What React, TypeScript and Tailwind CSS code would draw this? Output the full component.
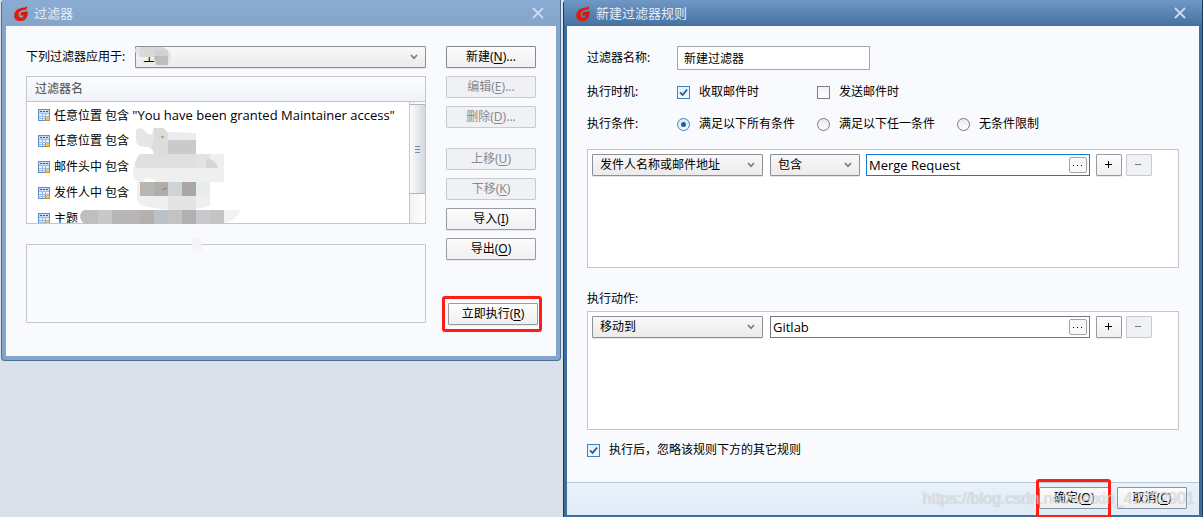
import type { ReactNode, SelectHTMLAttributes, ButtonHTMLAttributes } from "react";

function Logo() {
  return (
    <svg viewBox="0 0 14 15" className="h-[15px] w-[14px] shrink-0" aria-hidden="true">
      <path
        d="M13 0 L13 2.4 C12.5 3.5 11.4 3.9 9.8 4 C6.6 4.4 4.8 6 4.6 8.6 C4.5 10.6 5.3 11.5 6.8 11.5 C8.3 11.5 9.3 11 9.6 9.4 L6.2 9.4 L7.2 6.2 L13.8 5.2 C14 11.4 11.8 15 6.2 15 C2.2 15 0 12.8 0.2 9.4 C0.4 5.2 3.6 2 8.6 1.8 C10.8 1.6 12 1.2 13 0 Z"
        fill="#dc1f0c"
      />
      <path d="M6.6 9.2 L7.8 7.2 L11.4 6.6 C11.4 8.6 11 10.2 10 11" fill="none" stroke="#a81005" strokeWidth="0.6" />
    </svg>
  );
}

function TitleBar({ title, active }: { title: string; active?: boolean }) {
  return (
    <header
      className={
        "flex h-[26px] items-center gap-[6px] pr-4 pl-3 text-[#e3edf8] " +
        (active ? "bg-linear-to-b from-[#7098c6] to-[#44719f]" : "bg-linear-to-b from-[#8bacd2] to-[#84a4ca]")
      }
    >
      <Logo />
      <h1 className="flex-1 text-[13px] leading-5">{title}</h1>
      <button type="button" aria-label="关闭" className="grid h-5 w-3 place-items-center">
        <svg viewBox="0 0 12 12" className="h-3 w-3" aria-hidden="true">
          <path d="M1 1 L11 11 M11 1 L1 11" stroke="#c8dcf0" strokeWidth="1.8" />
        </svg>
      </button>
    </header>
  );
}

function PushButton({ children, className = "", ...rest }: ButtonHTMLAttributes<HTMLButtonElement>) {
  return (
    <button
      type="button"
      className={
        "flex h-[22px] shrink-0 items-center justify-center rounded-[1px] border border-[#999ba0] bg-linear-to-b from-[#fcfcfc] to-[#f0f0f1] shadow-[0_1px_0_#e9eaee] disabled:border-[#c8cacd] disabled:from-[#f0f1f4] disabled:to-[#f0f1f4] disabled:text-[#88898c] disabled:shadow-none " +
        className
      }
      {...rest}
    >
      {children}
    </button>
  );
}

function Mnemonic({ label, k, more }: { label: string; k: string; more?: boolean }) {
  return (
    <span>
      {label}(<u className="underline-offset-2">{k}</u>){more ? "..." : ""}
    </span>
  );
}

function DropDown({ className = "", children, ...rest }: SelectHTMLAttributes<HTMLSelectElement>) {
  return (
    <div className={"grid h-[22px] items-center " + className}>
      <select
        className="col-start-1 row-start-1 h-[22px] w-full appearance-none rounded-[1px] border border-[#8d8f93] bg-linear-to-b from-[#f8f8f8] to-[#ebebec] pr-6 pl-[7px] shadow-[0_1px_0_#e4e5e9]"
        {...rest}
      >
        {children}
      </select>
      <svg
        viewBox="0 0 8 6"
        className="pointer-events-none col-start-1 row-start-1 mr-2 h-[6px] w-2 justify-self-end"
        aria-hidden="true"
      >
        <path d="M1 1 L4 4.4 L7 1" fill="none" stroke="#77797d" strokeWidth="1.6" />
      </svg>
    </div>
  );
}

function Check({ label, checked }: { label: string; checked?: boolean }) {
  return (
    <label className="flex items-center gap-[9px]">
      <span className="grid h-[13px] w-[13px] place-items-center">
        <input
          type="checkbox"
          defaultChecked={checked}
          className="peer col-start-1 row-start-1 h-[13px] w-[13px] appearance-none border border-[#7f8084] bg-linear-to-b from-[#f2f2f3] to-white checked:border-[#3d85bf] checked:from-[#e2f0fa] checked:to-[#f4fafe]"
        />
        <svg
          viewBox="0 0 9 9"
          className="pointer-events-none invisible col-start-1 row-start-1 h-[9px] w-[9px] peer-checked:visible"
          aria-hidden="true"
        >
          <path d="M1 4.4 L3.6 7 L8 1.6" fill="none" stroke="#1f609c" strokeWidth="1.8" />
        </svg>
      </span>
      {label}
    </label>
  );
}

function Radio({ label, checked }: { label: string; checked?: boolean }) {
  return (
    <label className="flex items-center gap-[9px]">
      <span className="grid h-[13px] w-[13px] place-items-center">
        <input
          type="radio"
          name="match"
          defaultChecked={checked}
          className="peer col-start-1 row-start-1 h-[13px] w-[13px] appearance-none rounded-full border border-[#77797d] bg-linear-to-b from-[#e9e9ea] to-white checked:border-[#3d85bf] checked:from-[#d6eafa] checked:to-[#f0f8fe]"
        />
        <span className="pointer-events-none invisible col-start-1 row-start-1 h-[5px] w-[5px] rounded-full bg-[#1c609d] peer-checked:visible" />
      </span>
      {label}
    </label>
  );
}

function BrowseField({ id, label, value, focus }: { id: string; label: string; value: string; focus?: boolean }) {
  return (
    <div
      className={
        "flex h-[22px] min-w-0 flex-1 items-center border bg-white pr-[2px] " +
        (focus ? "border-[#0f7bd4]" : "border-[#77797d]")
      }
    >
      <input
        id={id}
        aria-label={label}
        defaultValue={value}
        className="h-5 min-w-0 flex-1 bg-transparent pl-[2px] font-['Open_Sans','Noto_Sans_CJK_SC',sans-serif] text-[13px] outline-none"
      />
      <button
        type="button"
        aria-label="浏览"
        className="grid h-4 w-[18px] place-items-center rounded-[2px] border border-[#a2a4a8] bg-[#f9f9fa]"
      >
        <svg viewBox="0 0 10 1" className="h-px w-[10px]" aria-hidden="true">
          <path d="M0 0h1v1h-1z M4 0h1v1h-1z M8 0h1v1h-1z" fill="#000" />
        </svg>
      </button>
    </div>
  );
}

function AddRemove() {
  return (
    <div className="flex gap-1">
      <PushButton aria-label="添加" className="w-[26px]">
        <svg viewBox="0 0 8 8" className="h-2 w-2" aria-hidden="true">
          <path d="M3 0h1v3h3v1h-3v3h-1v-3h-3v-1h3z" fill="#000" />
        </svg>
      </PushButton>
      <PushButton aria-label="移除" className="w-[26px]" disabled>
        <svg viewBox="0 0 8 8" className="h-2 w-2" aria-hidden="true">
          <path d="M0 3h6v1h-6z" fill="#77797d" />
        </svg>
      </PushButton>
    </div>
  );
}

function RuleIcon() {
  return (
    <svg viewBox="0 0 12 12" className="h-3 w-3 shrink-0" aria-hidden="true">
      <rect x="0.5" y="0.5" width="11" height="11" fill="#e6effa" stroke="#5f8fca" />
      <rect x="1" y="1" width="10" height="3" fill="#c9dcf3" />
      <path d="M2 2.5h2M5 2.5h2M8 2.5h2" stroke="#2f5fa5" />
      <path d="M1 4.5h10M1 7.5h10M1 9.5h10M4.5 4v7M7.5 4v7" stroke="#9dbce3" />
      <rect x="7" y="8" width="5" height="4" fill="#e08a1e" />
      <rect x="8" y="8" width="3" height="3" fill="#ffc04d" />
    </svg>
  );
}

function AccountMosaic() {
  return (
    <svg viewBox="0 0 40 24" className="pointer-events-none absolute top-0 left-0 h-6 w-10" aria-hidden="true">
      <path d="M0 4 Q0 1 5 1 L28 1 Q37 5 36 12 Q36 17 31 20 L19 20 L19 11 L5 11 Q0 8 0 4Z" fill="#e4e4e5" />
      <path d="M5 1h23l5 4v6h-28z" fill="#d9d9da" />
      <path d="M19 4h14v15h-11q-3-4-3-9z" fill="#bebebf" />
      <path d="M19 4h14v6h-14z" fill="#d0d0d1" />
    </svg>
  );
}

function ListMosaic() {
  return (
    <svg
      viewBox="0 0 170 130"
      className="pointer-events-none absolute top-[49px] left-[54px] h-[130px] w-[170px]"
      aria-hidden="true"
    >
      <path d="M56 5q4-4 8 0q2 4 8 5l1-6q5-2 9-1q4 1 4 4l30 1v21h-40q-4-5-8-7q-12 1-12-7z" fill="#e6e6e7" />
      <path d="M74 3h9q5 3 5 8v18h-14q-4-7 0-15z" fill="#dcdcd8" />
      <path d="M88 15h28v14h-28z" fill="#c9cacc" />
      <path d="M88 8h28v7h-28z" fill="#ebeced" />
      <path d="M81 12h3" stroke="#77797d" />
      <path d="M60 29h84v28h-84q-6 0-7-8q0-12 7-20z" fill="#efeff0" />
      <path d="M60 29h56v14h-56q-5 0-5-4q1-6 5-10z" fill="#dfdfdf" />
      <path d="M116 29h14v14h-14z" fill="#e3e3e3" />
      <path d="M126 34q9-1 12 9h-12z" fill="#d5d5d4" />
      <path d="M63 57q4-8 13 0z" fill="#fff" />
      <path d="M57 57h73v24q-30 8-66 0q-7-2-7-8z" fill="#efefef" />
      <path d="M60 57h14v14h-14z" fill="#b8b6b2" />
      <path d="M74 57h14v14h-14z" fill="#b0adab" />
      <path d="M88 57h14v14h-14z" fill="#ced3d8" />
      <path d="M102 57h14v14h-14z" fill="#aaa6a8" />
      <path d="M116 57h14v14h-14z" fill="#e7ecef" />
      <path d="M82 65l5-2" stroke="#77797d" />
      <path d="M88 71h28v14h-28z" fill="#e4e4e3" />
      <path d="M4 85h52v14h-50q-4 0-6-7q0-5 4-7z" fill="#c0bfbf" />
      <path d="M18 85h14v14h-14z" fill="#cac7c8" />
      <path d="M32 85h28v14h-28z" fill="#b8b5b5" />
      <path d="M60 85h14v14h-14z" fill="#b4b0b0" />
      <path d="M74 85h14v14h-14z" fill="#bcc1c5" />
      <path d="M88 85h14v14h-14z" fill="#c3c3c3" />
      <path d="M102 85h14v14h-14z" fill="#afb1af" />
      <path d="M116 85h14v14h-14z" fill="#c9c8cc" />
      <path d="M130 85h14v14h-14z" fill="#c5c4c4" />
      <path d="M144 85h17q-8 13-17 13z" fill="#f2f2f3" />
      <path d="M110 112h10l3 14h-9z" fill="#f4f5f9" />
    </svg>
  );
}

const rules: ReactNode[] = [
  <>
    任意位置 包含{" "}
    <span className="font-['Open_Sans',sans-serif] text-[13px]">"You have been granted Maintainer access"</span>
  </>,
  "任意位置 包含",
  "邮件头中 包含",
  "发件人中 包含",
  "主题",
];

function RuleList() {
  return (
    <div className="relative">
      <div className="h-[148px] overflow-hidden border border-[#c5c6cc] bg-white">
        <div className="flex h-full flex-col">
          <div className="flex h-[25px] shrink-0 items-center border-b border-[#c5c6cc] bg-linear-to-b from-[#fbfcfe] to-[#eff2f7] pl-2 font-medium text-[#5f6165]">
            <span id="rules-title">过滤器名</span>
          </div>
          <div className="flex min-h-0 flex-1">
            <table aria-labelledby="rules-title" className="min-w-0 flex-1 self-start">
              <tbody>
                {rules.map((rule, i) => (
                  <tr key={i} className="block h-[26px]">
                    <td className="flex h-[26px] items-center gap-1 pl-[11px] whitespace-nowrap">
                      <RuleIcon />
                      <span>{rule}</span>
                    </td>
                  </tr>
                ))}
              </tbody>
            </table>
            <div className="w-4 border-l border-[#c5c6cc] bg-linear-to-r from-[#f2f2f3] to-white pt-[2px]">
              <div className="flex h-[90px] flex-col items-center justify-center gap-[2px] border-y border-[#b1b6bd] bg-linear-to-r from-[#fbfcfd] to-[#d3d8dd]">
                <span className="h-px w-[5px] bg-[#6d8fb5]" />
                <span className="h-px w-[5px] bg-[#6d8fb5]" />
                <span className="h-px w-[5px] bg-[#6d8fb5]" />
              </div>
            </div>
          </div>
        </div>
      </div>
      <ListMosaic />
    </div>
  );
}

function FilterDialog() {
  return (
    <section className="mr-[2px] ml-px self-start overflow-hidden rounded-b-[4px] rounded-tl-[4px] border-x border-b border-[#4c6f94] bg-[#84a5cb]">
      <TitleBar title="过滤器" />
      <div className="mx-1 mb-1 flex items-start gap-5 bg-[#f9fafe] px-5 pt-5 pb-6">
        <div className="flex min-w-0 flex-1 flex-col">
          <div className="flex h-[22px] items-center gap-[10px]">
            <label htmlFor="account" className="whitespace-nowrap">
              下列过滤器应用于:
            </label>
            <div className="relative min-w-0 flex-1">
              <DropDown id="account">
                <option>主</option>
              </DropDown>
              <AccountMosaic />
            </div>
          </div>
          <div className="mt-2">
            <RuleList />
          </div>
          <div className="mt-5 h-[79px] rounded-[1px] border border-[#c5c6c9]" />
        </div>
        <div className="flex w-[90px] shrink-0 flex-col gap-2">
          <PushButton className="border-[#88898c] from-[#e3e3e4] to-[#e9e9e9]">
            <Mnemonic label="新建" k="N" more />
          </PushButton>
          <PushButton disabled>
            <Mnemonic label="编辑" k="E" more />
          </PushButton>
          <PushButton disabled>
            <Mnemonic label="删除" k="D" more />
          </PushButton>
          <PushButton disabled className="mt-3">
            <Mnemonic label="上移" k="U" />
          </PushButton>
          <PushButton disabled>
            <Mnemonic label="下移" k="K" />
          </PushButton>
          <PushButton>
            <Mnemonic label="导入" k="I" />
          </PushButton>
          <PushButton>
            <Mnemonic label="导出" k="O" />
          </PushButton>
          <div className="mt-7 -ml-1 w-[100px] rounded-[3px] border-3 border-[#ff1e14] bg-[#fbfbfe] pt-1 pr-px pb-1 pl-[3px]">
            <PushButton className="w-full">
              <Mnemonic label="立即执行" k="R" />
            </PushButton>
          </div>
        </div>
      </div>
    </section>
  );
}

function RuleDialog() {
  return (
    <section className="flex flex-col rounded-tl-[4px] border-x border-[#1d3c5e] bg-[#416d9e]">
      <TitleBar title="新建过滤器规则" active />
      <div className="mr-[3px] ml-[3px] flex flex-col bg-[#f9fafe] px-5 pt-5 pb-[22px]">
        <div className="flex h-6 items-center">
          <label htmlFor="rule-name" className="w-[90px]">
            过滤器名称:
          </label>
          <input
            id="rule-name"
            defaultValue="新建过滤器"
            className="h-6 w-[193px] border border-[#a5a7ab] bg-white px-[6px] outline-none"
          />
        </div>
        <div role="group" aria-labelledby="when" className="mt-3 grid h-5 grid-cols-[90px_140px_140px_auto] items-center">
          <span id="when">执行时机:</span>
          <Check label="收取邮件时" checked />
          <Check label="发送邮件时" />
        </div>
        <div role="radiogroup" aria-labelledby="cond" className="mt-3 grid h-5 grid-cols-[90px_140px_140px_auto] items-center">
          <span id="cond">执行条件:</span>
          <Radio label="满足以下所有条件" checked />
          <Radio label="满足以下任一条件" />
          <Radio label="无条件限制" />
        </div>
        <div className="mt-[15px] h-[119px] border border-[#c5c6c9] bg-white py-1 pr-[26px] pl-1">
          <div className="flex gap-[6px]">
            <DropDown aria-label="条件字段" className="mr-px w-[171px]">
              <option>发件人名称或邮件地址</option>
            </DropDown>
            <DropDown aria-label="匹配方式" className="w-[90px]">
              <option>包含</option>
            </DropDown>
            <BrowseField id="cond-value" label="条件值" value="Merge Request" focus />
            <AddRemove />
          </div>
        </div>
        <div className="mt-[21px] flex h-5 items-center">执行动作:</div>
        <div className="mt-[2px] h-[119px] border border-[#c5c6c9] bg-white py-1 pr-[26px] pl-1">
          <div className="flex gap-[6px]">
            <DropDown aria-label="动作" className="mr-px w-[171px]">
              <option>移动到</option>
            </DropDown>
            <BrowseField id="action-value" label="目标文件夹" value="Gitlab" />
            <AddRemove />
          </div>
        </div>
        <div className="mt-[10px] flex h-5 items-center">
          <Check label="执行后，忽略该规则下方的其它规则" checked />
        </div>
      </div>
      <footer className="relative mr-[3px] mb-[2px] ml-[3px] flex h-[33px] justify-end gap-2 border-t border-[#b9c6d3] bg-linear-to-b from-[#e9f2fa] to-[#dfebf7] pt-1 pr-3">
        <div className="relative">
          <PushButton className="w-[70px] border-[#8494a6] from-[#f3f8fd] to-[#dfeaf6]">
            <Mnemonic label="确定" k="O" />
          </PushButton>
          <span className="pointer-events-none absolute -top-2 -right-[2px] -bottom-[3px] -left-[3px] rounded-[3px] border-3 border-[#ff1e14]" />
        </div>
        <PushButton className="w-[70px] border-[#8494a6] from-[#f3f8fd] to-[#dfeaf6]">
          <Mnemonic label="取消" k="C" />
        </PushButton>
        <span className="pointer-events-none absolute top-1 right-1 font-['Liberation_Sans',sans-serif] text-[16px] leading-6 text-white/60 [text-shadow:0_0_1px_rgba(110,120,130,0.6)]">
          https://blog.csdn.net/weixin_42352901
        </span>
      </footer>
    </section>
  );
}

export default function App() {
  return (
    <main className="grid min-h-screen grid-cols-[563fr_640fr] bg-[#dae1e9] font-['Noto_Sans','Noto_Sans_CJK_SC',sans-serif] text-[12px] leading-4 text-black">
      <FilterDialog />
      <RuleDialog />
    </main>
  );
}
